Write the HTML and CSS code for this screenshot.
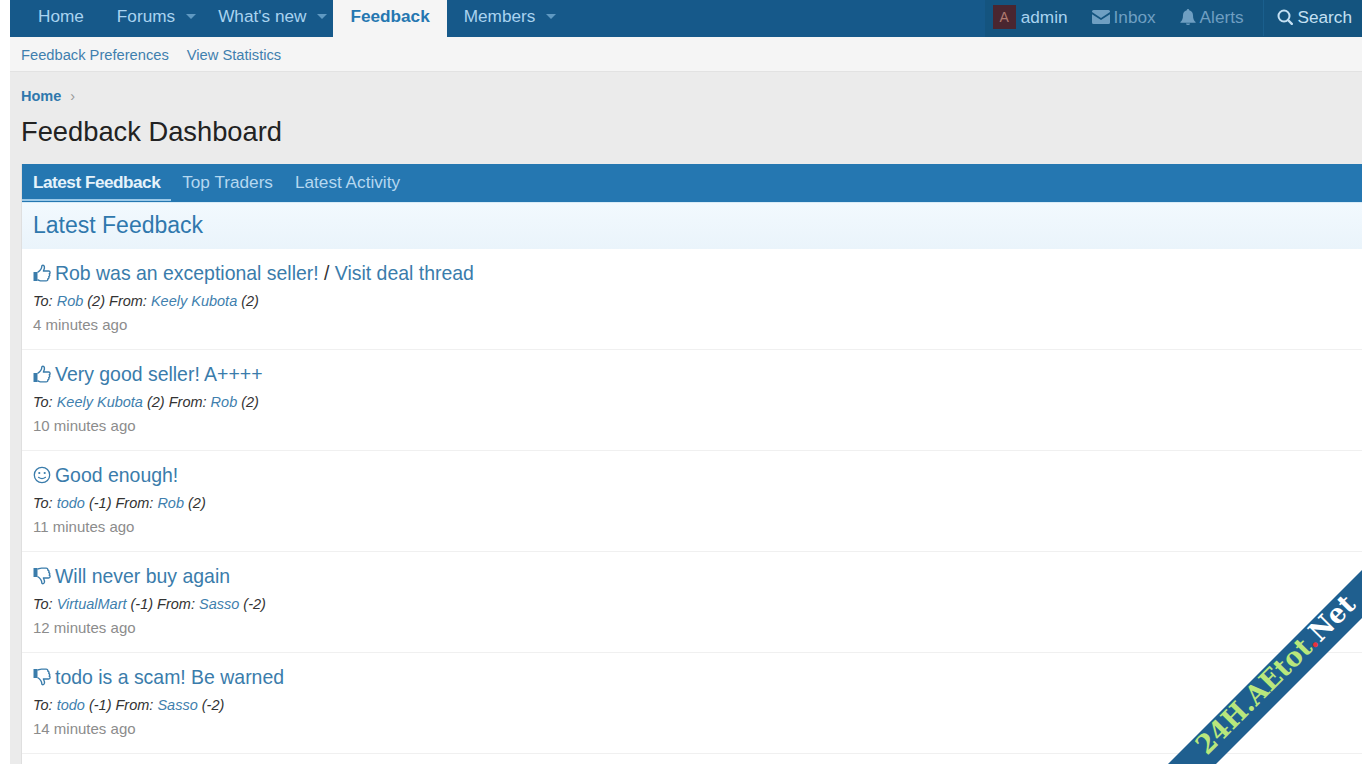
FILE: index.html
```html
<!DOCTYPE html>
<html lang="en">
<head>
    <meta charset="UTF-8">
    <title>Feedback Dashboard</title>
    <link rel="stylesheet" href="styles.css">
</head>
<body>
    <div class="page">
        <!-- Main navigation -->
        <header class="nav">
            <div class="nav-left">
                <a class="nav-item">Home</a>
                <a class="nav-item has-caret">Forums</a>
                <a class="nav-item has-caret">What's new</a>
                <a class="nav-item active">Feedback</a>
                <a class="nav-item has-caret">Members</a>
            </div>
            <div class="nav-right">
                <a class="user-link"><span class="avatar">A</span>admin</a>
                <a class="nav-muted">
                    <svg class="nav-icon" width="18" height="14" viewBox="0 0 18 14"><path fill="currentColor" d="M1.5 0h15A1.5 1.5 0 0 1 18 1.5v.6L9 8 0 2.100v-.6A1.500 1.500 0 0 1 1.500 0zM0 4.200l9 5.900 9-5.900v8.300a1.500 1.500 0 0 1-1.500 1.500h-15A1.500 1.500 0 0 1 0 12.500z"/></svg>
                    Inbox
                </a>
                <a class="nav-muted">
                    <svg class="nav-icon" width="16" height="16" viewBox="0 0 16 16"><path fill="currentColor" d="M8 0a1.200 1.200 0 0 1 1.200 1.300C11.600 1.800 13 3.700 13 6.200c0 3.800 1 5.300 2.600 6.800v.8H.4V13C2 11.500 3 10 3 6.200c0-2.500 1.400-4.400 3.800-4.900A1.200 1.200 0 0 1 8 0zM6 14.500h4a2 1.500 0 0 1-4 0z"/></svg>
                    Alerts
                </a>
                <a class="nav-search">
                    <svg class="nav-icon" width="16" height="16" viewBox="0 0 16 16"><circle cx="7" cy="7" r="5.500" fill="none" stroke="currentColor" stroke-width="2"/><path stroke="currentColor" stroke-width="2.400" stroke-linecap="round" d="M11 11l3.800 3.800"/></svg>
                    Search
                </a>
            </div>
        </header>

        <div class="subnav">
            <a>Feedback Preferences</a>
            <a>View Statistics</a>
        </div>

        <div class="page-head">
            <div class="breadcrumb"><a>Home</a><span class="crumb-sep">&rsaquo;</span></div>
            <h1>Feedback Dashboard</h1>
        </div>

        <main class="block">
            <div class="tabs">
                <a class="tab active">Latest Feedback</a>
                <a class="tab">Top Traders</a>
                <a class="tab">Latest Activity</a>
            </div>
            <h2 class="block-title">Latest Feedback</h2>

            <!-- Item 1 -->
            <div class="feedback-row">
                <div class="feedback-title">
                    <svg class="rate-icon" width="18" height="18" viewBox="0 0 18 18"><use href="#thumb-up"/></svg>
                    <span><a>Rob was an exceptional seller!</a> / <a>Visit deal thread</a></span>
                </div>
                <div class="feedback-meta">To: <a>Rob</a> (2) From: <a>Keely Kubota</a> (2)</div>
                <div class="feedback-time">4 minutes ago</div>
            </div>

            <!-- Item 2 -->
            <div class="feedback-row">
                <div class="feedback-title">
                    <svg class="rate-icon" width="18" height="18" viewBox="0 0 18 18"><use href="#thumb-up"/></svg>
                    <span><a>Very good seller! A++++</a></span>
                </div>
                <div class="feedback-meta">To: <a>Keely Kubota</a> (2) From: <a>Rob</a> (2)</div>
                <div class="feedback-time">10 minutes ago</div>
            </div>

            <!-- Item 3 -->
            <div class="feedback-row">
                <div class="feedback-title">
                    <svg class="rate-icon" width="18" height="18" viewBox="0 0 18 18">
                        <circle cx="9" cy="9" r="7.700" fill="none" stroke="currentColor" stroke-width="1.300"/>
                        <circle cx="6.300" cy="7" r="1.100" fill="currentColor"/>
                        <circle cx="11.700" cy="7" r="1.100" fill="currentColor"/>
                        <path d="M5.500 11.300c2 1.500 5 1.500 7 0" fill="none" stroke="currentColor" stroke-width="1.200" stroke-linecap="round"/>
                    </svg>
                    <span><a>Good enough!</a></span>
                </div>
                <div class="feedback-meta">To: <a>todo</a> (-1) From: <a>Rob</a> (2)</div>
                <div class="feedback-time">11 minutes ago</div>
            </div>

            <!-- Item 4 -->
            <div class="feedback-row">
                <div class="feedback-title">
                    <svg class="rate-icon" width="18" height="18" viewBox="0 0 18 18"><use href="#thumb-down"/></svg>
                    <span><a>Will never buy again</a></span>
                </div>
                <div class="feedback-meta">To: <a>VirtualMart</a> (-1) From: <a>Sasso</a> (-2)</div>
                <div class="feedback-time">12 minutes ago</div>
            </div>

            <!-- Item 5 -->
            <div class="feedback-row">
                <div class="feedback-title">
                    <svg class="rate-icon" width="18" height="18" viewBox="0 0 18 18"><use href="#thumb-down"/></svg>
                    <span><a>todo is a scam! Be warned</a></span>
                </div>
                <div class="feedback-meta">To: <a>todo</a> (-1) From: <a>Sasso</a> (-2)</div>
                <div class="feedback-time">14 minutes ago</div>
            </div>
        </main>
    </div>

    <!-- Shared icon shapes -->
    <svg class="icon-defs" width="0" height="0">
        <defs>
            <g id="thumb-up">
                <path fill="currentColor" d="M.5 8h4v9h-4z"/>
                <path fill="none" stroke="currentColor" stroke-width="1.400" stroke-linejoin="round" d="M4.500 8.500C6.800 7 8.800 4.300 8.800 2.300 8.800.9 10.900.8 11.400 2.600c.4 1.600-.5 3.300-1 4.400h5.300c1.700 0 1.800 2.300.5 2.800.9.900.6 2.300-.4 2.700.5 1.100 0 2.200-1 2.500.2 1.200-.5 1.900-1.700 1.900H8.500c-1.600 0-2.600-.8-4-1.100"/>
            </g>
            <g id="thumb-down">
                <path fill="currentColor" d="M.5 1h4v9h-4z"/>
                <path fill="none" stroke="currentColor" stroke-width="1.400" stroke-linejoin="round" d="M4.500 9.500C6.800 11 8.800 13.700 8.800 15.700c0 1.400 2.100 1.500 2.600-.3.400-1.600-.5-3.300-1-4.400h5.300c1.700 0 1.800-2.300.5-2.800.9-.9.600-2.300-.4-2.700.5-1.100 0-2.200-1-2.500.2-1.200-.5-1.900-1.700-1.900H8.500c-1.600 0-2.600.8-4 1.100"/>
            </g>
        </defs>
    </svg>

    <!-- Corner watermark -->
    <svg class="watermark" width="196" height="196" viewBox="0 0 196 196">
        <polygon fill="#1f5f8f" points="196,2 196,50 50,196 2,196"/>
        <text class="watermark-text" transform="translate(41 188) rotate(-45)" textLength="212" lengthAdjust="spacingAndGlyphs">24H.AEtot<tspan class="watermark-dot">.</tspan><tspan class="watermark-net">Net</tspan></text>
    </svg>
</body>
</html>
```

FILE: styles.css
```css
html, body {
    height: 100%;
}

body {
    margin: 0;
    overflow: hidden;
    background: #fff;
    font-family: "Liberation Sans", Arial, sans-serif;
    color: #222;
}

.page {
    margin-left: 10px;
    height: 100%;
    display: flex;
    flex-direction: column;
    background: #ebebeb;
}

/* Navigation */
.nav {
    display: flex;
    justify-content: space-between;
    height: 37px;
    flex: none;
    background: #16598a;
    font-size: 17.200px;
    color: #a9d3f0;
    border-bottom: 1px solid #8fc4e6;
    margin-bottom: -1px;
}

.nav-left, .nav-right {
    display: flex;
    align-items: stretch;
}

.nav-item {
    display: flex;
    align-items: center;
    padding: 0 17px 4px;
}

.nav-item:first-child {
    padding: 0 16px 4px 28px;
}

.nav-item.has-caret {
    padding-right: 5px;
}

.nav-item.has-caret::after {
    content: "";
    margin-left: 11px;
    border: 5px solid transparent;
    border-top-color: #5f99c2;
    border-bottom: 0;
}

.nav-item.active {
    background: #f5f5f5;
    color: #2577b1;
    font-weight: bold;
    margin: 0 0 -1px 1px;
    padding: 0 17px 5px;
}

.nav-right {
    background: #14547f;
    align-items: center;
    padding-left: 8px;
    padding-bottom: 3px;
}

.user-link {
    display: flex;
    align-items: center;
    gap: 5px;
}

.avatar {
    width: 23px;
    height: 24px;
    display: flex;
    align-items: center;
    justify-content: center;
    background: #4a2630;
    color: #b07a70;
    font-size: 14px;
}

.nav-muted {
    display: flex;
    align-items: center;
    gap: 4px;
    color: #6f9fc2;
    margin-left: 24px;
}

.nav-search {
    display: flex;
    align-items: center;
    gap: 5px;
    margin-left: 19px;
    padding: 8px 10px 8px 13px;
    border-left: 1px solid #1a5f8d;
    color: #c4e0f3;
}

.nav-icon {
    flex: none;
}

/* Sub navigation */
.subnav {
    flex: none;
    height: 33px;
    display: flex;
    align-items: center;
    gap: 18px;
    padding: 1px 0 0 11px;
    background: #f5f5f5;
    border-bottom: 1px solid #e2e2e2;
    font-size: 14.700px;
    color: #3f7fae;
}

/* Title area */
.page-head {
    flex: none;
    padding: 16px 0 0 11px;
    height: 92px;
    box-sizing: border-box;
}

.breadcrumb {
    font-size: 14.500px;
    font-weight: bold;
    color: #2f78ad;
    height: 18px;
}

.crumb-sep {
    font-weight: normal;
    color: #999;
    margin-left: 9px;
}

h1 {
    margin: 10px 0 0;
    font-size: 27.300px;
    line-height: 32px;
    font-weight: normal;
    color: #222;
}

/* Main block */
.block {
    flex: 1;
    margin-left: 11px;
    background: #fff;
    border-left: 1px solid #dfdfdf;
}

.tabs {
    height: 38px;
    display: flex;
    background: #2577b1;
    font-size: 17.200px;
    color: #b5d8f0;
}

.tab {
    display: flex;
    align-items: center;
    padding: 0 11px 2px;
}

.tab.active {
    color: #e6f3fb;
    font-weight: bold;
    border-bottom: 2px solid #9cc9e8;
    padding: 1px 11px 0;
    box-sizing: border-box;
    height: 37px;
    letter-spacing: -0.5px;
}

.block-title {
    margin: 0;
    height: 47px;
    line-height: 45px;
    padding-left: 11px;
    font-size: 23px;
    font-weight: normal;
    color: #2f78ad;
    background: linear-gradient(#f2f9fe, #eaf4fb);
    border-top: 1px solid #d8ebf7;
    box-sizing: border-box;
}

.feedback-row {
    height: 101px;
    box-sizing: border-box;
    padding: 12px 11px 0;
    border-bottom: 1px solid #f0f0f0;
}

.feedback-title {
    display: flex;
    align-items: center;
    gap: 4px;
    font-size: 19.450px;
    line-height: 24px;
    color: #333;
    height: 24px;
}

.feedback-title a, .rate-icon {
    color: #3a7cab;
}

.rate-icon {
    flex: none;
}

.icon-defs {
    position: absolute;
}

.feedback-meta {
    margin-top: 7px;
    font-size: 14.500px;
    line-height: 18px;
    font-style: italic;
    color: #333;
}

.feedback-meta a {
    color: #3f7fae;
}

.feedback-time {
    margin-top: 6px;
    font-size: 15px;
    line-height: 18px;
    color: #8c8c8c;
}

/* Watermark over the page corner */
.watermark {
    position: absolute;
    right: 0;
    bottom: 0;
}

.watermark-text {
    font-family: "DejaVu Serif", serif;
    font-weight: bold;
    font-size: 27px;
    fill: #b9e77c;
}

.watermark-dot {
    fill: #e8323c;
}

.watermark-net {
    fill: #fff;
}
```
